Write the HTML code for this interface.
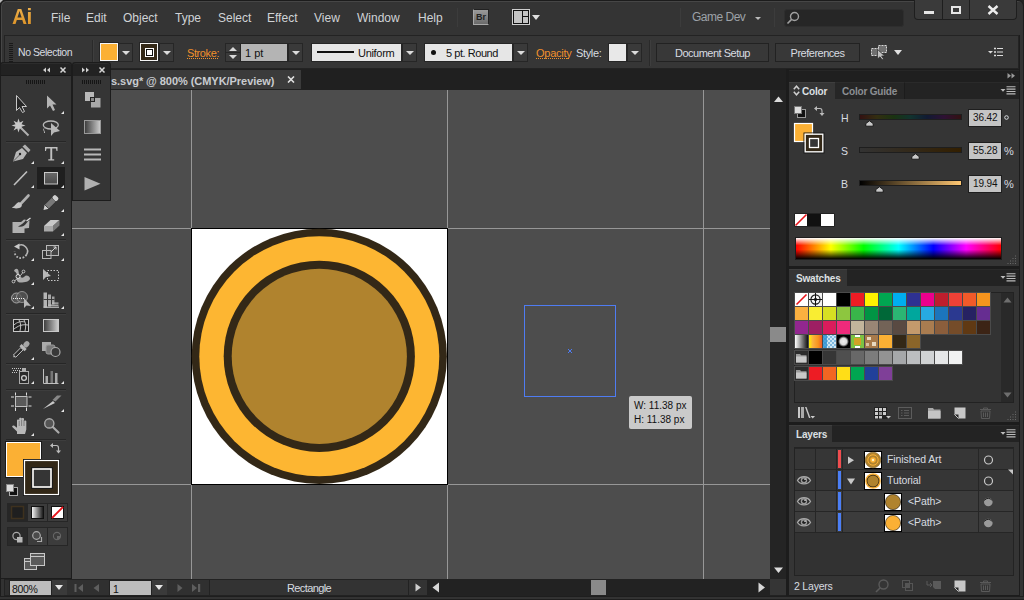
<!DOCTYPE html>
<html><head><meta charset="utf-8">
<style>
*{margin:0;padding:0;box-sizing:border-box}
html,body{width:1024px;height:600px;overflow:hidden;background:#232323}
body{position:relative;font-family:"Liberation Sans",sans-serif;font-size:11px;color:#d6d6d6}
.a{position:absolute}
.t{position:absolute;white-space:nowrap;line-height:1}
.dd{position:absolute;top:43px;width:15px;height:19px;background:#3a3a3a;border:1px solid #262626}
.dd::after{content:"";position:absolute;left:3px;top:7px;border-left:4px solid transparent;border-right:4px solid transparent;border-top:4px solid #dcdcdc}
.btn{position:absolute;top:43px;height:19px;background:#383838;border:1px solid #222;text-align:center;font-size:11px;line-height:18px;color:#d8dce0;white-space:nowrap;letter-spacing:-0.5px}
.sdd{position:absolute;top:580px;width:15px;height:15px;background:#3a3a3a}
.sdd::after{content:"";position:absolute;left:3px;top:5px;border-left:4.5px solid transparent;border-right:4.5px solid transparent;border-top:5px solid #e6e6e6}
.ptab{font-size:10px;font-weight:bold;letter-spacing:-0.2px}
.mi{top:12px;font-size:12px;color:#d0d3d6}
</style></head><body>
<!-- window frame -->
<div class="a" style="left:0;top:0;width:1024px;height:600px;background:#333;border-radius:6px 6px 0 0;border:1px solid #1c1c1c;box-shadow:inset 1px 1px 0 #464646"></div>
<div class="a" style="left:0;top:0;width:3px;height:3px;background:#bbb;clip-path:polygon(0 0,100% 0,0 100%)"></div>
<!-- menu bar -->
<div class="a" id="menubar" style="left:2px;top:2px;width:1020px;height:33px;background:#343434;border-radius:5px 5px 0 0"></div>

<!-- MENUBAR CONTENT -->
<div class="t" style="left:12px;top:6px;font-size:22px;font-weight:bold;color:#e39c2f;background:linear-gradient(#f0b24e,#d98f22);-webkit-background-clip:text;background-clip:text;-webkit-text-fill-color:transparent;transform:scaleX(0.95);transform-origin:0 0;letter-spacing:-0.5px">Ai</div>
<div class="t mi" style="left:51px">File</div>
<div class="t mi" style="left:86px">Edit</div>
<div class="t mi" style="left:123px">Object</div>
<div class="t mi" style="left:175px">Type</div>
<div class="t mi" style="left:218px">Select</div>
<div class="t mi" style="left:267px">Effect</div>
<div class="t mi" style="left:314px">View</div>
<div class="t mi" style="left:357px">Window</div>
<div class="t mi" style="left:418px">Help</div>
<div class="a" style="left:457px;top:8px;width:1px;height:19px;background:#262626;border-right:1px solid #3c3c3c"></div>
<div class="a" style="left:473px;top:9px;width:16px;height:16px;background:linear-gradient(#9a9a9a,#6a6a6a);border:1px solid #a8a8a8;border-top-color:#222;border-right-color:#222"></div>
<div class="t" style="left:476px;top:13px;font-size:9px;color:#222;font-weight:bold">Br</div>
<div class="a" style="left:512px;top:9px;width:18px;height:16px;border:1px solid #cfcfcf;background:#111"></div>
<div class="a" style="left:514px;top:11px;width:8px;height:12px;background:#c4c4c4"></div>
<div class="a" style="left:523px;top:11px;width:5px;height:5px;background:#c4c4c4"></div>
<div class="a" style="left:523px;top:17px;width:5px;height:6px;background:#c4c4c4"></div>
<svg class="a" style="left:532px;top:15px" width="8" height="6"><path d="M0 0H8L4 5Z" fill="#e0e0e0"/></svg>
<div class="a" style="left:680px;top:8px;width:1px;height:19px;background:#262626;border-right:1px solid #3c3c3c"></div>
<div class="t" style="left:692px;top:11px;font-size:12px;color:#9da2a8;letter-spacing:-0.5px">Game Dev</div>
<svg class="a" style="left:755px;top:17px" width="6" height="3"><path d="M0 0H6L3 3Z" fill="#bbb"/></svg>
<div class="a" style="left:774px;top:8px;width:1px;height:19px;background:#262626;border-right:1px solid #3c3c3c"></div>
<div class="a" style="left:784px;top:9px;width:120px;height:18px;background:#262626;border-radius:3px;border:1px solid #2e2e2e"></div>
<svg class="a" style="left:786px;top:11px" width="14" height="14"><circle cx="8.5" cy="5.5" r="4" fill="none" stroke="#a0a0a0" stroke-width="1.4"/><path d="M5.6 8.4L1.5 12.5" stroke="#a0a0a0" stroke-width="1.6"/></svg>
<div class="a" style="left:914px;top:0;width:103px;height:20px;background:#3a3a3a;border:1px solid #1e1e1e;border-top:none;border-radius:0 0 4px 4px"></div>
<div class="a" style="left:942px;top:0;width:1px;height:19px;background:#1e1e1e"></div>
<div class="a" style="left:969px;top:0;width:1px;height:19px;background:#1e1e1e"></div>
<div class="a" style="left:924px;top:11px;width:10px;height:3px;background:#e6e6e6"></div>
<div class="a" style="left:951px;top:6px;width:10px;height:8px;border:2px solid #e6e6e6"></div>
<svg class="a" style="left:987px;top:5px" width="12" height="10"><path d="M1.5 1L10.5 9M10.5 1L1.5 9" stroke="#ededed" stroke-width="2.4"/></svg>
<!-- control bar -->
<div class="a" id="ctrl" style="left:4px;top:35px;width:1015px;height:34px;background:#363636;border:1px solid #232323"></div>

<!-- CONTROL BAR CONTENT -->
<div class="a" style="left:9px;top:43px;width:4px;height:19px;background:repeating-linear-gradient(#1a1a1a 0 1px,transparent 1px 2px)"></div>
<div class="t" style="left:18px;top:47px;font-size:10.5px;color:#d8dce0;letter-spacing:-0.45px">No Selection</div>
<div class="a" style="left:92px;top:40px;width:2px;height:26px;border-left:1px solid #2a2a2a;border-right:1px solid #3e3e3e"></div>
<div class="a" style="left:100px;top:43px;width:18px;height:18px;background:#fbb034;border:1px solid #f4f4f4;box-shadow:0 0 0 1px #262626"></div>
<div class="dd" style="left:118px"></div>
<div class="a" style="left:140px;top:43px;width:18px;height:18px;background:#332817;border:1px solid #f4f4f4;box-shadow:0 0 0 1px #262626"></div>
<div class="a" style="left:145px;top:48px;width:9px;height:9px;background:#fff;border:1px solid #fff;box-shadow:inset 0 0 0 1px #111"></div>
<div class="dd" style="left:159px"></div>
<div class="t" style="left:187px;top:48px;font-size:11px;color:#f0902c;letter-spacing:-0.4px">Stroke:</div>
<div class="a" style="left:187px;top:58px;width:32px;height:1px;background:repeating-linear-gradient(90deg,#f0902c 0 1px,transparent 1px 2px)"></div>
<div class="a" style="left:225px;top:43px;width:16px;height:19px;background:#3a3a3a;border:1px solid #262626"></div>
<div class="a" style="left:226px;top:52px;width:14px;height:1px;background:#262626"></div>
<svg class="a" style="left:229px;top:47px" width="8" height="4"><path d="M0 4H8L4 0Z" fill="#d8d8d8"/></svg>
<svg class="a" style="left:229px;top:55px" width="8" height="4"><path d="M0 0H8L4 4Z" fill="#d8d8d8"/></svg>
<div class="a" style="left:241px;top:43px;width:47px;height:19px;background:#b4b4b4;border:1px solid #262626;border-left:none"></div>
<div class="t" style="left:245px;top:48px;font-size:11px;color:#111">1 pt</div>
<div class="dd" style="left:288px"></div>
<div class="a" style="left:311px;top:43px;width:91px;height:19px;background:#e6e6e6;border:1px solid #262626"></div>
<div class="a" style="left:317px;top:51px;width:37px;height:2px;background:#111"></div>
<div class="t" style="left:358px;top:48px;font-size:11px;color:#111;letter-spacing:-0.3px">Uniform</div>
<div class="dd" style="left:402px"></div>
<div class="a" style="left:424px;top:43px;width:89px;height:19px;background:#e6e6e6;border:1px solid #262626"></div>
<div class="a" style="left:431px;top:50px;width:5px;height:5px;border-radius:50%;background:#111"></div>
<div class="t" style="left:446px;top:48px;font-size:11px;color:#111;letter-spacing:-0.45px">5 pt. Round</div>
<div class="dd" style="left:513px"></div>
<div class="t" style="left:536px;top:48px;font-size:11px;color:#f0902c;letter-spacing:-0.25px">Opacity</div>
<div class="a" style="left:536px;top:58px;width:34px;height:1px;background:repeating-linear-gradient(90deg,#f0902c 0 1px,transparent 1px 2px)"></div>
<div class="t" style="left:576px;top:48px;font-size:11px;color:#d8dce0;letter-spacing:-0.35px">Style:</div>
<div class="a" style="left:608px;top:43px;width:19px;height:19px;background:#e8e8e8;border:1px solid #262626"></div>
<div class="dd" style="left:627px"></div>
<div class="a" style="left:649px;top:40px;width:2px;height:26px;border-left:1px solid #2a2a2a;border-right:1px solid #3e3e3e"></div>
<div class="btn" style="left:656px;width:113px">Document Setup</div>
<div class="btn" style="left:775px;width:85px">Preferences</div>
<svg class="a" style="left:870px;top:44px" width="18" height="16">
<rect x="1.5" y="4.5" width="8" height="7" fill="#707070" stroke="#d8d8d8" stroke-width="1" stroke-dasharray="2 1"/>
<rect x="8.5" y="1.5" width="8" height="7" fill="#707070" stroke="#d8d8d8" stroke-width="1" stroke-dasharray="2 1"/>
<path d="M7.5 5.5L7.5 15L10 12.8L12.2 15.8L13.6 14.9L11.6 12H14.8Z" fill="#c0c0c0" stroke="#2a2a2a" stroke-width="0.7"/>
</svg>
<svg class="a" style="left:894px;top:50px" width="8" height="6"><path d="M0 0H8L4 5Z" fill="#e0e0e0"/></svg>
<svg class="a" style="left:988px;top:47px" width="16" height="10"><path d="M0 4H5L2.5 6.5Z" fill="#ddd"/><path d="M6 1.5H8M6 5H8M6 8.5H8" stroke="#ddd" stroke-width="1.6"/><path d="M9 1.5H15M9 5H15M9 8.5H15" stroke="#ddd" stroke-width="1.2"/></svg>
<!-- tab bar strip -->
<div class="a" style="left:4px;top:69px;width:783px;height:21px;background:#202020"></div>

<!-- TAB -->
<div class="a" style="left:73px;top:70px;width:228px;height:19px;background:#3b3b3b"></div>
<div class="t" style="left:111px;top:76px;font-size:11px;font-weight:bold;color:#c9ccd0;letter-spacing:-0.05px">s.svg* @ 800% (CMYK/Preview)</div>
<svg class="a" style="left:287px;top:76px" width="8" height="7"><path d="M1 0.5L7 6.5M7 0.5L1 6.5" stroke="#e0e0e0" stroke-width="1.6"/></svg>
<!-- canvas -->
<div class="a" id="canvas" style="left:72px;top:90px;width:698px;height:489px;background:#4d4d4d;overflow:hidden"></div>

<svg class="a" style="left:72px;top:90px" width="698" height="489">
<g transform="translate(-72,-90)">
<rect x="191.5" y="228.5" width="256" height="256" fill="#fff" stroke="#000" stroke-width="1"/>
<path d="M191.5 90V228M447.5 90V228M703.5 90V579M191.5 485V579M447.5 485V579M72 228.5H191M448 228.5H770M72 484.5H191M448 484.5H770" stroke="#979797" stroke-width="1" fill="none"/>
<circle cx="319.3" cy="356.3" r="127.6" fill="#332817"/>
<circle cx="319.3" cy="356.3" r="120" fill="#fdb632"/>
<circle cx="319.3" cy="356.3" r="95.6" fill="#332817"/>
<circle cx="319.3" cy="356.3" r="87.6" fill="#b0832e"/>
<rect x="524.5" y="305.5" width="91" height="91" fill="none" stroke="#4f7cf2" stroke-width="1"/>
<path d="M568 349L572 353M572 349L568 353" stroke="#4f7cf2" stroke-width="1"/>
</g>
</svg>
<div class="a" style="left:629px;top:396px;width:63px;height:33px;background:#cacaca;border-radius:2px"></div>
<div class="t" style="left:634px;top:401px;font-size:10px;color:#111">W: 11.38 px</div>
<div class="t" style="left:634px;top:415px;font-size:10px;color:#111">H: 11.38 px</div>
<!-- v scrollbar -->
<div class="a" style="left:770px;top:90px;width:16px;height:489px;background:#242424"></div>
<svg class="a" style="left:774px;top:96px" width="10" height="7"><path d="M0 6H9L4.5 0.5Z" fill="#dcdcdc"/></svg>
<svg class="a" style="left:774px;top:567px" width="10" height="7"><path d="M0 0.5H9L4.5 6Z" fill="#dcdcdc"/></svg>
<div class="a" style="left:770px;top:327px;width:16px;height:15px;background:#8a8a8a"></div>
<!-- status bar -->
<div class="a" style="left:1px;top:579px;width:786px;height:17px;background:#323232"></div>
<div class="a" style="left:4px;top:579px;width:783px;height:17px;background:#222"></div>
<div class="a" style="left:5px;top:580px;width:4px;height:15px;background:#2e2e2e"></div>
<div class="a" style="left:10px;top:581px;width:41px;height:14px;background:#bdbdbd"></div>
<div class="t" style="left:12px;top:584px;font-size:10.5px;color:#111;letter-spacing:-0.3px">800%</div>
<div class="sdd" style="left:52px"></div>
<div class="a" style="left:67px;top:580px;width:42px;height:15px;background:#303030"></div>
<svg class="a" style="left:74px;top:584px" width="10" height="8"><rect x="0.5" y="0" width="2" height="8" fill="#5e5e5e"/><path d="M9 0V8L4 4Z" fill="#5e5e5e"/></svg>
<svg class="a" style="left:93px;top:584px" width="7" height="8"><path d="M6 0V8L0.5 4Z" fill="#5e5e5e"/></svg>
<div class="a" style="left:110px;top:581px;width:41px;height:14px;background:#bdbdbd"></div>
<div class="t" style="left:113px;top:584px;font-size:10.5px;color:#111">1</div>
<div class="sdd" style="left:152px"></div>
<div class="a" style="left:167px;top:580px;width:42px;height:15px;background:#303030"></div>
<svg class="a" style="left:177px;top:584px" width="7" height="8"><path d="M0.5 0V8L5.5 4Z" fill="#5e5e5e"/></svg>
<svg class="a" style="left:192px;top:584px" width="10" height="8"><path d="M0 0V8L5 4Z" fill="#5e5e5e"/><rect x="6" y="0" width="2.2" height="8" fill="#5e5e5e"/></svg>
<div class="a" style="left:210px;top:580px;width:198px;height:15px;background:#333"></div>
<div class="t" style="left:287px;top:583px;font-size:11px;color:#d8dce0;letter-spacing:-0.6px">Rectangle</div>
<div class="a" style="left:409px;top:580px;width:18px;height:15px;background:#333"></div>
<svg class="a" style="left:415px;top:583px" width="7" height="9"><path d="M0.5 0.5V8.5L6 4.5Z" fill="#cfcfcf"/></svg>
<div class="a" style="left:428px;top:579px;width:342px;height:17px;background:#222"></div>
<svg class="a" style="left:432px;top:582px" width="8" height="11"><path d="M7 0.5V10.5L0.5 5.5Z" fill="#d6d6d6"/></svg>
<svg class="a" style="left:758px;top:582px" width="8" height="11"><path d="M0.5 0.5V10.5L7 5.5Z" fill="#d6d6d6"/></svg>
<div class="a" style="left:591px;top:580px;width:15px;height:15px;background:#8a8a8a"></div>
<div class="a" style="left:770px;top:579px;width:16px;height:16px;background:#353535"></div>
<div class="a" style="left:0;top:596px;width:1024px;height:4px;background:#333;border-top:1px solid #1e1e1e;border-bottom:1px solid #1e1e1e"></div>
<!-- DOCK -->
<div class="a" style="left:786px;top:69px;width:3px;height:527px;background:#1c1c1c"></div>
<div class="a" style="left:789px;top:69px;width:230px;height:527px;background:#1c1c1c"></div>
<div class="a" style="left:1019px;top:35px;width:5px;height:561px;background:#333;border-left:1px solid #1c1c1c;border-right:1px solid #1e1e1e"></div>
<div class="a" style="left:789px;top:70px;width:230px;height:12px;background:#1f1f1f;border-top:1px solid #262626"></div>
<svg class="a" style="left:1007px;top:73px" width="9" height="6"><path d="M0.5 0V5.5L4 2.75Z M4.5 0V5.5L8 2.75Z" fill="#9a9a9a"/></svg>
<div class="a" style="left:789px;top:82px;width:230px;height:17px;background:#232323;border-top:1px solid #2a2a2a"></div>
<div class="a" style="left:789px;top:82px;width:46px;height:17px;background:#353535;border-top:1px solid #3e3e3e"></div>
<div class="t ptab" style="left:802px;top:87px;color:#dde0e3">Color</div>
<div class="a" style="left:835px;top:82px;width:70px;height:17px;background:#262626;border-right:1px solid #1c1c1c;border-top:1px solid #2c2c2c"></div>
<div class="t ptab" style="left:842px;top:87px;color:#8c8f93">Color Guide</div>
<svg class="a" style="left:1000px;top:86px" width="16" height="9"><path d="M0.5 3H5.5L3 5.8Z" fill="#bbb"/><path d="M6.5 0.7H15.5M6.5 3.1H15.5M6.5 5.5H15.5M6.5 7.9H15.5" stroke="#bbb" stroke-width="1.1"/></svg>
<svg class="a" style="left:793px;top:85px" width="7" height="11"><path d="M0.8 4.2L3.5 1.2L6.2 4.2M0.8 6.8L3.5 9.8L6.2 6.8" fill="none" stroke="#d0d0d0" stroke-width="1.5"/></svg>
<div class="a" style="left:789px;top:99px;width:230px;height:167px;background:#353535"></div>
<svg class="a" style="left:793px;top:104px" width="34" height="50"><rect x="4.5" y="5.5" width="8" height="8" fill="#111" stroke="#999" stroke-width="1"/><rect x="1.5" y="2.5" width="7" height="7" fill="#ddd" stroke="#777" stroke-width="1"/><path d="M22 4.5H27C28.5 4.5 29 5.5 29 7V10" fill="none" stroke="#bbb" stroke-width="1.1"/><path d="M21 4.5L24 2V7Z M26.5 9H31.5L29 12Z" fill="#bbb"/><rect x="1.5" y="19.5" width="18" height="18" fill="#fbb034" stroke="#fff" stroke-width="1.2"/><rect x="11" y="29" width="20" height="20" fill="none" stroke="#1a1a1a" stroke-width="1"/><rect x="12.2" y="30.2" width="17.6" height="17.6" fill="#332817" stroke="#fff" stroke-width="1.3"/><rect x="16.5" y="34.5" width="9" height="9" fill="#353535" stroke="#fff" stroke-width="1.3"/></svg>
<div class="t" style="left:841px;top:113px;font-size:10.5px;color:#d8dce0">H</div>
<div class="a" style="left:859px;top:114px;width:103px;height:6px;background:linear-gradient(90deg,#331111,#332e11,#1a3311,#11332e,#111a33,#2e1133,#331111);border:1px solid #1e1e1e"></div>
<svg class="a" style="left:865.1px;top:120px" width="9" height="7"><path d="M0.8 6.2V3.6L4.5 0.8L8.2 3.6V6.2Z" fill="#c8c8c8" stroke="#111" stroke-width="0.9"/></svg>
<div class="a" style="left:968px;top:109px;width:34px;height:18px;background:#c4c4c4;border:1px solid #1e1e1e"></div>
<div class="t" style="left:973px;top:113px;font-size:10px;color:#111;letter-spacing:-0.1px">36.42</div>
<svg class="a" style="left:1004px;top:115px" width="5" height="5"><circle cx="2.5" cy="2.5" r="1.8" fill="none" stroke="#d8dce0" stroke-width="1"/></svg>
<div class="t" style="left:841px;top:146px;font-size:10.5px;color:#d8dce0">S</div>
<div class="a" style="left:859px;top:147px;width:103px;height:6px;background:linear-gradient(90deg,#333333,#331f00);border:1px solid #1e1e1e"></div>
<svg class="a" style="left:910.9px;top:153px" width="9" height="7"><path d="M0.8 6.2V3.6L4.5 0.8L8.2 3.6V6.2Z" fill="#c8c8c8" stroke="#111" stroke-width="0.9"/></svg>
<div class="a" style="left:968px;top:142px;width:34px;height:18px;background:#c4c4c4;border:1px solid #1e1e1e"></div>
<div class="t" style="left:973px;top:146px;font-size:10px;color:#111;letter-spacing:-0.1px">55.28</div>
<div class="t" style="left:1004px;top:146px;font-size:11px;color:#d8dce0">%</div>
<div class="t" style="left:841px;top:179px;font-size:10.5px;color:#d8dce0">B</div>
<div class="a" style="left:859px;top:180px;width:103px;height:6px;background:linear-gradient(90deg,#000,#ffc772);border:1px solid #1e1e1e"></div>
<svg class="a" style="left:874.8px;top:186px" width="9" height="7"><path d="M0.8 6.2V3.6L4.5 0.8L8.2 3.6V6.2Z" fill="#c8c8c8" stroke="#111" stroke-width="0.9"/></svg>
<div class="a" style="left:968px;top:175px;width:34px;height:18px;background:#c4c4c4;border:1px solid #1e1e1e"></div>
<div class="t" style="left:973px;top:179px;font-size:10px;color:#111;letter-spacing:-0.1px">19.94</div>
<div class="t" style="left:1004px;top:179px;font-size:11px;color:#d8dce0">%</div>
<svg class="a" style="left:794px;top:213px" width="41" height="14"><rect x="0.5" y="0.5" width="40" height="13" fill="#111"/><rect x="1" y="1" width="12" height="12" fill="#fff"/><path d="M1.5 12.5L12.5 1.5" stroke="#e8141b" stroke-width="1.6"/><rect x="27" y="1" width="13" height="12" fill="#fff"/></svg>
<div class="a" style="left:795px;top:237px;width:207px;height:23px;border:1px solid #1e1e1e;background:linear-gradient(to bottom,rgba(255,255,255,1) 0%,rgba(255,255,255,0) 35%,rgba(0,0,0,0) 55%,rgba(0,0,0,1) 100%),linear-gradient(90deg,#f00,#ff0 17%,#0f0 33%,#0ff 50%,#00f 67%,#f0f 83%,#f00)"></div>
<svg class="a" style="left:1007px;top:255px" width="10" height="10"><rect x="0.5" y="8.0" width="1" height="1" fill="#6a6a6a"/><rect x="3.0" y="5.5" width="1" height="1" fill="#6a6a6a"/><rect x="3.0" y="8.0" width="1" height="1" fill="#6a6a6a"/><rect x="5.5" y="3.0" width="1" height="1" fill="#6a6a6a"/><rect x="5.5" y="5.5" width="1" height="1" fill="#6a6a6a"/><rect x="5.5" y="8.0" width="1" height="1" fill="#6a6a6a"/><rect x="8.0" y="0.5" width="1" height="1" fill="#6a6a6a"/><rect x="8.0" y="3.0" width="1" height="1" fill="#6a6a6a"/><rect x="8.0" y="5.5" width="1" height="1" fill="#6a6a6a"/><rect x="8.0" y="8.0" width="1" height="1" fill="#6a6a6a"/></svg>
<div class="a" style="left:789px;top:266px;width:230px;height:3px;background:#1c1c1c"></div>
<div class="a" style="left:789px;top:269px;width:230px;height:17px;background:#232323;border-top:1px solid #2a2a2a"></div>
<div class="a" style="left:789px;top:269px;width:58px;height:17px;background:#353535;border-top:1px solid #3e3e3e"></div>
<div class="t ptab" style="left:796px;top:274px;color:#dde0e3">Swatches</div>
<svg class="a" style="left:1000px;top:273px" width="16" height="9"><path d="M0.5 3H5.5L3 5.8Z" fill="#bbb"/><path d="M6.5 0.7H15.5M6.5 3.1H15.5M6.5 5.5H15.5M6.5 7.9H15.5" stroke="#bbb" stroke-width="1.1"/></svg>
<div class="a" style="left:789px;top:286px;width:230px;height:136px;background:#353535"></div>
<div class="a" style="left:794px;top:292px;width:220px;height:111px;background:#333;border:1px solid #222"></div>
<div class="a" style="left:1001px;top:293px;width:12px;height:109px;background:#292929"></div>
<svg class="a" style="left:1003px;top:297px" width="9" height="6"><path d="M0.5 5.5H8.5L4.5 0.5Z" fill="#6e6e6e"/></svg>
<svg class="a" style="left:1003px;top:392px" width="9" height="6"><path d="M0.5 0.5H8.5L4.5 5.5Z" fill="#6e6e6e"/></svg>
<svg class="a" style="left:794px;top:292px" width="207" height="92"><defs><linearGradient id="sg1"><stop offset="0" stop-color="#fff"/><stop offset="1" stop-color="#111"/></linearGradient><linearGradient id="sg2"><stop offset="0" stop-color="#fff200"/><stop offset="0.3" stop-color="#fbb040"/><stop offset="0.7" stop-color="#f7941d"/><stop offset="1" stop-color="#f15a29"/></linearGradient><pattern id="chk" width="4" height="4" patternUnits="userSpaceOnUse"><rect width="4" height="4" fill="#cfe8f5"/><rect width="2" height="2" fill="#7fb9e0"/><rect x="2" y="2" width="2" height="2" fill="#7fb9e0"/></pattern><radialGradient id="rad"><stop offset="0" stop-color="#eee"/><stop offset="0.6" stop-color="#ddd"/><stop offset="1" stop-color="#000"/></radialGradient></defs><rect x="0" y="0" width="197" height="15" fill="#4a4a4a"/><rect x="0" y="14" width="197" height="15" fill="#4a4a4a"/><rect x="0" y="28" width="197" height="15" fill="#4a4a4a"/><rect x="0" y="42" width="127" height="15" fill="#4a4a4a"/><rect x="1" y="1" width="13" height="13" fill="#fff"/><path d="M2.5 12.5L12.5 2.5" stroke="#e8141b" stroke-width="1.6"/><rect x="15" y="1" width="13" height="13" fill="#f2f2f2"/><circle cx="21.5" cy="7.5" r="4.6" fill="none" stroke="#111" stroke-width="1.1"/><circle cx="21.5" cy="7.5" r="1.3" fill="#fff" stroke="#111" stroke-width="0.9"/><path d="M21.5 1V14M15 7.5H28" stroke="#111" stroke-width="1"/><rect x="29" y="1" width="13" height="13" fill="#ffffff"/><rect x="43" y="1" width="13" height="13" fill="#000000"/><rect x="57" y="1" width="13" height="13" fill="#ed1c24"/><rect x="71" y="1" width="13" height="13" fill="#fff200"/><rect x="85" y="1" width="13" height="13" fill="#00a651"/><rect x="99" y="1" width="13" height="13" fill="#00aeef"/><rect x="113" y="1" width="13" height="13" fill="#2e3192"/><rect x="127" y="1" width="13" height="13" fill="#ec008c"/><rect x="141" y="1" width="13" height="13" fill="#be1e2d"/><rect x="155" y="1" width="13" height="13" fill="#ef4136"/><rect x="169" y="1" width="13" height="13" fill="#f15a29"/><rect x="183" y="1" width="13" height="13" fill="#f7941d"/><rect x="1" y="15" width="13" height="13" fill="#fbb040"/><rect x="15" y="15" width="13" height="13" fill="#f9ed32"/><rect x="29" y="15" width="13" height="13" fill="#d7df23"/><rect x="43" y="15" width="13" height="13" fill="#8dc63f"/><rect x="57" y="15" width="13" height="13" fill="#39b54a"/><rect x="71" y="15" width="13" height="13" fill="#009444"/><rect x="85" y="15" width="13" height="13" fill="#006838"/><rect x="99" y="15" width="13" height="13" fill="#2bb673"/><rect x="113" y="15" width="13" height="13" fill="#00a79d"/><rect x="127" y="15" width="13" height="13" fill="#27aae1"/><rect x="141" y="15" width="13" height="13" fill="#1c75bc"/><rect x="155" y="15" width="13" height="13" fill="#2b3990"/><rect x="169" y="15" width="13" height="13" fill="#262262"/><rect x="183" y="15" width="13" height="13" fill="#662d91"/><rect x="1" y="29" width="13" height="13" fill="#92278f"/><rect x="15" y="29" width="13" height="13" fill="#9e1f63"/><rect x="29" y="29" width="13" height="13" fill="#da1c5c"/><rect x="43" y="29" width="13" height="13" fill="#ee2a7b"/><rect x="57" y="29" width="13" height="13" fill="#c2b59b"/><rect x="71" y="29" width="13" height="13" fill="#998675"/><rect x="85" y="29" width="13" height="13" fill="#736357"/><rect x="99" y="29" width="13" height="13" fill="#594a42"/><rect x="113" y="29" width="13" height="13" fill="#c49a6c"/><rect x="127" y="29" width="13" height="13" fill="#a97c50"/><rect x="141" y="29" width="13" height="13" fill="#8b5e3c"/><rect x="155" y="29" width="13" height="13" fill="#754c29"/><rect x="169" y="29" width="13" height="13" fill="#603913"/><rect x="183" y="29" width="13" height="13" fill="#3c2415"/><rect x="1" y="43" width="13" height="13" fill="url(#sg1)"/><rect x="15" y="43" width="13" height="13" fill="url(#sg2)"/><rect x="29" y="43" width="13" height="13" fill="url(#chk)"/><rect x="29" y="43" width="4" height="13" fill="#2a8fd0" opacity="0.8"/><rect x="43" y="43" width="13" height="13" fill="#000"/><circle cx="49.5" cy="49.5" r="5.5" fill="url(#rad)"/><rect x="57" y="43" width="13" height="13" fill="#7cc242"/><rect x="60" y="46" width="7" height="7" fill="#f7941d" opacity="0.7"/><rect x="61" y="43" width="5" height="2" fill="#fff"/><rect x="61" y="54" width="5" height="2" fill="#fff"/><rect x="71" y="43" width="13" height="13" fill="#a87a4a"/><rect x="73" y="45" width="4" height="3" fill="#e8d9c0"/><rect x="78" y="50" width="4" height="4" fill="#e8d9c0"/><rect x="72" y="51" width="3" height="3" fill="#d8c0a0"/><rect x="85" y="43" width="13" height="13" fill="#fbb034"/><rect x="99" y="43" width="13" height="13" fill="#332817"/><rect x="113" y="43" width="13" height="13" fill="#8b6529"/><rect x="0" y="58" width="169" height="15" fill="#4a4a4a"/><rect x="1" y="59" width="13" height="13" fill="#2c2c2c"/><path d="M2 62H6L7.2 63.2H12.5V70.5H2Z" fill="#9a9a9a"/><rect x="2" y="64.5" width="10.5" height="6" fill="#c8c8c8"/><rect x="15" y="59" width="13" height="13" fill="#000000"/><rect x="29" y="59" width="13" height="13" fill="#363636"/><rect x="43" y="59" width="13" height="13" fill="#4f4f4f"/><rect x="57" y="59" width="13" height="13" fill="#686868"/><rect x="71" y="59" width="13" height="13" fill="#7c7c7c"/><rect x="85" y="59" width="13" height="13" fill="#939393"/><rect x="99" y="59" width="13" height="13" fill="#a6a8aa"/><rect x="113" y="59" width="13" height="13" fill="#bcbec0"/><rect x="127" y="59" width="13" height="13" fill="#d1d3d4"/><rect x="141" y="59" width="13" height="13" fill="#e6e7e8"/><rect x="155" y="59" width="13" height="13" fill="#f1f2f2"/><rect x="0" y="74" width="99" height="15" fill="#4a4a4a"/><rect x="1" y="75" width="13" height="13" fill="#2c2c2c"/><path d="M2 78H6L7.2 79.2H12.5V86.5H2Z" fill="#9a9a9a"/><rect x="2" y="80.5" width="10.5" height="6" fill="#c8c8c8"/><rect x="15" y="75" width="13" height="13" fill="#ed1c24"/><rect x="29" y="75" width="13" height="13" fill="#f26522"/><rect x="43" y="75" width="13" height="13" fill="#ffde17"/><rect x="57" y="75" width="13" height="13" fill="#00a651"/><rect x="71" y="75" width="13" height="13" fill="#21409a"/><rect x="85" y="75" width="13" height="13" fill="#7f3f98"/></svg>
<svg class="a" style="left:796px;top:405px" width="200" height="16"><rect x="2" y="2" width="2" height="11" fill="#c8c8c8"/><rect x="5" y="2" width="3" height="11" fill="#aaa"/><path d="M9 2L10.5 2L14.5 13H13Z" fill="#c8c8c8"/><path d="M14.5 11H19L16.75 13.5Z" fill="#ccc"/><rect x="78" y="2" width="13" height="12" fill="#222"/><rect x="79" y="3" width="3" height="3" fill="#ccc"/><rect x="83" y="3" width="3" height="3" fill="#ccc"/><rect x="87" y="3" width="3" height="3" fill="#ccc"/><rect x="79" y="7" width="3" height="3" fill="#ccc"/><rect x="83" y="7" width="3" height="3" fill="#999"/><rect x="87" y="7" width="3" height="3" fill="#ccc"/><rect x="79" y="11" width="3" height="2.5" fill="#ccc"/><rect x="83" y="11" width="3" height="2.5" fill="#ccc"/><path d="M90 11H95L92.5 13.5Z" fill="#ccc"/><rect x="102.5" y="2.5" width="13" height="11" fill="none" stroke="#5c5c5c"/><path d="M105 5.5H106.5M108 5.5H113M105 8H106.5M108 8H113M105 10.5H106.5M108 10.5H113" stroke="#5c5c5c"/><path d="M132 3H137L138 4.5H144.5V13.5H132Z" fill="#a8a8a8"/><rect x="132" y="6" width="12.5" height="7.5" fill="#c4c4c4"/><path d="M158.5 2.5H169.5V13.5H162.5L158.5 9.5Z" fill="#c8c8c8"/><path d="M158.5 9.5H162.5V13.5Z" fill="#2a2a2a"/><path d="M158.5 9.5L162.5 13.5" stroke="#ddd" stroke-width="0.8"/><path d="M184 4.5H195M187.5 4.5V3H191.5V4.5" stroke="#5a5a5a" fill="none"/><path d="M185 6H194L193.5 13.5H185.5Z" fill="none" stroke="#5a5a5a"/><path d="M187.5 7.5V12M189.5 7.5V12M191.5 7.5V12" stroke="#5a5a5a"/></svg>
<svg class="a" style="left:1007px;top:411px" width="10" height="10"><rect x="0.5" y="8.0" width="1" height="1" fill="#6a6a6a"/><rect x="3.0" y="5.5" width="1" height="1" fill="#6a6a6a"/><rect x="3.0" y="8.0" width="1" height="1" fill="#6a6a6a"/><rect x="5.5" y="3.0" width="1" height="1" fill="#6a6a6a"/><rect x="5.5" y="5.5" width="1" height="1" fill="#6a6a6a"/><rect x="5.5" y="8.0" width="1" height="1" fill="#6a6a6a"/><rect x="8.0" y="0.5" width="1" height="1" fill="#6a6a6a"/><rect x="8.0" y="3.0" width="1" height="1" fill="#6a6a6a"/><rect x="8.0" y="5.5" width="1" height="1" fill="#6a6a6a"/><rect x="8.0" y="8.0" width="1" height="1" fill="#6a6a6a"/></svg>
<div class="a" style="left:789px;top:422px;width:230px;height:3px;background:#1c1c1c"></div>
<div class="a" style="left:789px;top:425px;width:230px;height:17px;background:#232323;border-top:1px solid #2a2a2a"></div>
<div class="a" style="left:789px;top:425px;width:43px;height:17px;background:#353535;border-top:1px solid #3e3e3e"></div>
<div class="t ptab" style="left:796px;top:430px;color:#dde0e3">Layers</div>
<svg class="a" style="left:1000px;top:429px" width="16" height="9"><path d="M0.5 3H5.5L3 5.8Z" fill="#bbb"/><path d="M6.5 0.7H15.5M6.5 3.1H15.5M6.5 5.5H15.5M6.5 7.9H15.5" stroke="#bbb" stroke-width="1.1"/></svg>
<div class="a" style="left:789px;top:442px;width:230px;height:153px;background:#353535"></div>
<div class="a" style="left:794px;top:447px;width:220px;height:129px;background:#323232;border:1px solid #232323"></div>
<svg class="a" style="left:794px;top:447px" width="220" height="88"><rect x="1" y="1" width="219" height="21" fill="#262626"/><rect x="1" y="2" width="20" height="20" fill="#363636"/><rect x="22" y="2" width="20" height="20" fill="#363636"/><rect x="49" y="2" width="135" height="20" fill="#363636"/><rect x="185" y="2" width="34" height="20" fill="#363636"/><rect x="43" y="2" width="5" height="20" fill="#363636"/><rect x="44" y="3" width="3" height="18" fill="#f04d4f"/><path d="M54 9.5V17L60 13.25Z" fill="#c8c8c8"/><rect x="70" y="4" width="18" height="18" fill="#000"/><rect x="71" y="5" width="16" height="16" fill="#fff"/><circle cx="79" cy="13" r="7.8" fill="#b0832e" stroke="#7a5a1e" stroke-width="0.6"/><circle cx="79" cy="13" r="5.2" fill="none" stroke="#fbb034" stroke-width="1"/><circle cx="79" cy="13" r="2.8" fill="#fbb034"/><circle cx="79" cy="13" r="1.2" fill="#fff3c0"/><circle cx="194.5" cy="13" r="4" fill="none" stroke="#c8c8c8" stroke-width="1.2"/><rect x="1" y="22" width="219" height="21" fill="#262626"/><rect x="1" y="23" width="20" height="20" fill="#363636"/><rect x="22" y="23" width="20" height="20" fill="#363636"/><rect x="49" y="23" width="135" height="20" fill="#363636"/><rect x="185" y="23" width="34" height="20" fill="#363636"/><rect x="43" y="23" width="5" height="20" fill="#363636"/><rect x="44" y="24" width="3" height="18" fill="#4b7ef5"/><path d="M3.5 33.5C6 28.5 14 28.5 16.5 33.5C14 38 6 38 3.5 33.5Z" fill="#2a2a2a" stroke="#a8a8a8" stroke-width="1.3"/><circle cx="10" cy="33.2" r="3.2" fill="#9a9a9a"/><circle cx="10" cy="33.2" r="1.8" fill="#222"/><circle cx="11" cy="32.2" r="0.8" fill="#ddd"/><path d="M53 31.5H61L57 37.5Z" fill="#c8c8c8"/><rect x="70" y="25" width="18" height="18" fill="#000"/><rect x="71" y="26" width="16" height="16" fill="#fff"/><circle cx="79" cy="34" r="7.8" fill="#fbb034"/><circle cx="79" cy="34" r="6.3" fill="#332817"/><circle cx="79" cy="34" r="5.6" fill="#b0832e"/><circle cx="194.5" cy="34" r="4" fill="none" stroke="#c8c8c8" stroke-width="1.2"/><rect x="1" y="43" width="219" height="21" fill="#262626"/><rect x="1" y="44" width="20" height="20" fill="#3c3c3c"/><rect x="22" y="44" width="20" height="20" fill="#3c3c3c"/><rect x="49" y="44" width="135" height="20" fill="#3c3c3c"/><rect x="185" y="44" width="34" height="20" fill="#3c3c3c"/><rect x="43" y="44" width="5" height="20" fill="#3c3c3c"/><rect x="44" y="45" width="3" height="18" fill="#4b7ef5"/><path d="M3.5 54.5C6 49.5 14 49.5 16.5 54.5C14 59 6 59 3.5 54.5Z" fill="#2a2a2a" stroke="#a8a8a8" stroke-width="1.3"/><circle cx="10" cy="54.2" r="3.2" fill="#9a9a9a"/><circle cx="10" cy="54.2" r="1.8" fill="#222"/><circle cx="11" cy="53.2" r="0.8" fill="#ddd"/><rect x="90" y="46" width="18" height="18" fill="#000"/><rect x="91" y="47" width="16" height="16" fill="#fff"/><circle cx="99" cy="55" r="7.6" fill="#b0832e" stroke="#332817" stroke-width="0.7"/><circle cx="194.3" cy="55" r="4.3" fill="#9a9a9a"/><path d="M190.5 53.5A4.3 4.3 0 0 1 198 53.5" fill="none" stroke="#222" stroke-width="1"/><rect x="1" y="64" width="219" height="21" fill="#262626"/><rect x="1" y="65" width="20" height="20" fill="#3c3c3c"/><rect x="22" y="65" width="20" height="20" fill="#3c3c3c"/><rect x="49" y="65" width="135" height="20" fill="#3c3c3c"/><rect x="185" y="65" width="34" height="20" fill="#3c3c3c"/><rect x="43" y="65" width="5" height="20" fill="#3c3c3c"/><rect x="44" y="66" width="3" height="18" fill="#4b7ef5"/><path d="M3.5 75.5C6 70.5 14 70.5 16.5 75.5C14 80 6 80 3.5 75.5Z" fill="#2a2a2a" stroke="#a8a8a8" stroke-width="1.3"/><circle cx="10" cy="75.2" r="3.2" fill="#9a9a9a"/><circle cx="10" cy="75.2" r="1.8" fill="#222"/><circle cx="11" cy="74.2" r="0.8" fill="#ddd"/><rect x="90" y="67" width="18" height="18" fill="#000"/><rect x="91" y="68" width="16" height="16" fill="#fff"/><circle cx="99" cy="76" r="7.6" fill="#fbb034" stroke="#332817" stroke-width="0.7"/><circle cx="194.3" cy="76" r="4.3" fill="#9a9a9a"/><path d="M190.5 74.5A4.3 4.3 0 0 1 198 74.5" fill="none" stroke="#222" stroke-width="1"/><rect x="1" y="85" width="219" height="1" fill="#262626"/><path d="M214 22.5H219V27.5Z" fill="#c8c8c8"/></svg>
<div class="t" style="left:887px;top:454px;font-size:10.5px;color:#d8dce0;letter-spacing:-0.1px">Finished Art</div>
<div class="t" style="left:887px;top:475px;font-size:10.5px;color:#d8dce0;letter-spacing:-0.1px">Tutorial</div>
<div class="t" style="left:908px;top:496px;font-size:10.5px;color:#d8dce0;letter-spacing:-0.1px">&lt;Path&gt;</div>
<div class="t" style="left:908px;top:517px;font-size:10.5px;color:#d8dce0;letter-spacing:-0.1px">&lt;Path&gt;</div>
<div class="t" style="left:794px;top:581px;font-size:10.5px;color:#d8dce0;letter-spacing:-0.2px">2 Layers</div>
<svg class="a" style="left:874px;top:578px" width="120" height="16"><circle cx="9.5" cy="6.5" r="4.5" fill="none" stroke="#5a5a5a" stroke-width="1.4"/><path d="M6.3 9.7L2 14" stroke="#5a5a5a" stroke-width="1.6"/><rect x="28.5" y="2.5" width="7" height="7" fill="none" stroke="#555"/><rect x="31.5" y="5.5" width="7" height="7" fill="none" stroke="#555"/><rect x="32" y="6" width="3" height="3" fill="#555"/><path d="M53 3V7H58M56 5L58 7L56 9" fill="none" stroke="#5a5a5a"/><path d="M59 3H67V11H61L59 9Z" fill="#5a5a5a"/><path d="M80.5 2.5H91.5V13.5H84.5L80.5 9.5Z" fill="#c8c8c8"/><path d="M80.5 9.5H84.5V13.5Z" fill="#2a2a2a"/><path d="M80.5 9.5L84.5 13.5" stroke="#ddd" stroke-width="0.8"/><path d="M106 4.5H117M109.5 4.5V3H113.5V4.5" stroke="#5a5a5a" fill="none"/><path d="M107 6H116L115.5 13.5H107.5Z" fill="none" stroke="#5a5a5a"/><path d="M109.5 7.5V12M111.5 7.5V12M113.5 7.5V12" stroke="#5a5a5a"/></svg>

<!-- TOOLS PANEL 1 -->
<div class="a" style="left:0;top:62px;width:72px;height:517px;background:#1c1c1c;border-radius:3px 3px 0 0"></div>
<div class="a" style="left:1px;top:63px;width:70px;height:13px;background:#222;border-radius:3px 3px 0 0;border-top:1px solid #2c2c2c;border-bottom:1px solid #1a1a1a"></div>
<div class="a" style="left:1px;top:76px;width:70px;height:502px;background:#353535"></div>
<!-- TOOLS PANEL 2 -->
<div class="a" style="left:72px;top:62px;width:39px;height:139px;background:#1c1c1c;border-radius:3px 3px 0 0"></div>
<div class="a" style="left:73px;top:63px;width:37px;height:13px;background:#222;border-radius:3px 3px 0 0;border-top:1px solid #2c2c2c"></div>
<div class="a" style="left:73px;top:76px;width:37px;height:124px;background:#353535"></div>
<svg class="a" style="left:0;top:0" width="120" height="600"><path d="M46 67.5V72.5L43 70Z M50 67.5V72.5L47 70Z" fill="#cfcfcf"/><path d="M60.5 67.5L65.5 72.5M65.5 67.5L60.5 72.5" stroke="#d6d6d6" stroke-width="1.5"/><path d="M82 67.5V72.5L85 70Z M86 67.5V72.5L89 70Z" fill="#cfcfcf"/><path d="M99.5 67.5L104.5 72.5M104.5 67.5L99.5 72.5" stroke="#d6d6d6" stroke-width="1.5"/><rect x="26" y="80" width="1" height="4" fill="#151515"/><rect x="28" y="80" width="1" height="4" fill="#151515"/><rect x="30" y="80" width="1" height="4" fill="#151515"/><rect x="32" y="80" width="1" height="4" fill="#151515"/><rect x="34" y="80" width="1" height="4" fill="#151515"/><rect x="36" y="80" width="1" height="4" fill="#151515"/><rect x="38" y="80" width="1" height="4" fill="#151515"/><rect x="40" y="80" width="1" height="4" fill="#151515"/><rect x="42" y="80" width="1" height="4" fill="#151515"/><rect x="44" y="80" width="1" height="4" fill="#151515"/><rect x="82" y="80" width="1" height="4" fill="#151515"/><rect x="84" y="80" width="1" height="4" fill="#151515"/><rect x="86" y="80" width="1" height="4" fill="#151515"/><rect x="88" y="80" width="1" height="4" fill="#151515"/><rect x="90" y="80" width="1" height="4" fill="#151515"/><rect x="92" y="80" width="1" height="4" fill="#151515"/><rect x="94" y="80" width="1" height="4" fill="#151515"/><rect x="96" y="80" width="1" height="4" fill="#151515"/><rect x="98" y="80" width="1" height="4" fill="#151515"/><rect x="100" y="80" width="1" height="4" fill="#151515"/><rect x="6" y="141" width="60" height="1" fill="#262626"/><rect x="6" y="142" width="60" height="1" fill="#3d3d3d"/><rect x="6" y="239" width="60" height="1" fill="#262626"/><rect x="6" y="240" width="60" height="1" fill="#3d3d3d"/><rect x="6" y="313" width="60" height="1" fill="#262626"/><rect x="6" y="314" width="60" height="1" fill="#3d3d3d"/><rect x="6" y="363" width="60" height="1" fill="#262626"/><rect x="6" y="364" width="60" height="1" fill="#3d3d3d"/><rect x="6" y="389" width="60" height="1" fill="#262626"/><rect x="6" y="390" width="60" height="1" fill="#3d3d3d"/><rect x="6" y="439" width="60" height="1" fill="#262626"/><rect x="6" y="440" width="60" height="1" fill="#3d3d3d"/><path d="M16.5 95.5V110.5L19.5 107.5L22.5 112.5L24.5 111.5L22 106.5H26.5Z" fill="#262626" stroke="#c8c8c8" stroke-width="1"/><path d="M47 95.5V108.5L50 105.5L53 111L55 110L52.5 104.5H56.5Z" fill="#b4b4b4"/><path d="M64 111V114H61Z" fill="#e6e6e6"/><path d="M18.5 118.5L19.8 122.5L23.5 120.8L21.5 124.2L25.5 125.5L21.5 126.8L23.5 130.5L19.8 128.5L18.5 132.5L17.2 128.5L13.5 130.5L15.5 126.8L11.5 125.5L15.5 124.2L13.5 120.8L17.2 122.5Z" fill="#c8c8c8"/><path d="M21 128L28.5 135.5" stroke="#b0b0b0" stroke-width="2"/><ellipse cx="50.8" cy="125" rx="7.5" ry="4" fill="none" stroke="#b8b8b8" stroke-width="1.3"/><path d="M44 128.5C42.5 130 45 131 44.5 133" fill="none" stroke="#b8b8b8" stroke-width="1"/><path d="M51 123V136L54 132.5L60 131Z" fill="#b8b8b8"/><path d="M13 161.5L16 152L22 148L27 153L23 159Z" fill="#b8b8b8"/><path d="M22.5 146.5L25 144.5L30.5 150L28.5 152.5Z" fill="#b0b0b0"/><circle cx="20" cy="154" r="1.2" fill="#222"/><path d="M13.5 161L19.5 155" stroke="#444" stroke-width="0.8"/><path d="M34 161V164H31Z" fill="#e6e6e6"/><path d="M45 147H57.5V151H56.5L56 148.5H52.2V159.2H54.2V160.5H48.3V159.2H50.3V148.5H46.5L46 151H45Z" fill="#c0c0c0"/><path d="M64 161V164H61Z" fill="#e6e6e6"/><path d="M14 185L27 171.5" stroke="#c0c0c0" stroke-width="1.6"/><path d="M34 185V188H31Z" fill="#e6e6e6"/><rect x="37" y="167" width="28" height="22" fill="#1f1f1f"/><defs><linearGradient id="rg" x1="0" y1="0" x2="0" y2="1"><stop offset="0" stop-color="#6a6a6a"/><stop offset="1" stop-color="#4a4a4a"/></linearGradient><linearGradient id="gg" x1="0" y1="0" x2="1" y2="0"><stop offset="0" stop-color="#3a3a3a"/><stop offset="1" stop-color="#cfcfcf"/></linearGradient><linearGradient id="gw" x1="0" y1="0" x2="1" y2="0"><stop offset="0" stop-color="#fff"/><stop offset="1" stop-color="#111"/></linearGradient></defs><rect x="44.5" y="172.5" width="13" height="11.5" fill="url(#rg)" stroke="#c8c8c8" stroke-width="1"/><path d="M64 185V188H61Z" fill="#e6e6e6"/><path d="M28.5 195.5L21 203.5" stroke="#b0b0b0" stroke-width="2.6" stroke-linecap="round"/><path d="M19 202C16 203 15.5 206 12 207.5C14 208.8 19.5 209 21.5 206.5C22.5 205 21.5 203 19 202Z" fill="#c4c4c4"/><g transform="translate(50.3,203.2) rotate(-45)"><path d="M-9.5 0L-5 -3V3Z" fill="#d0d0d0"/><rect x="-5" y="-3" width="10" height="6" fill="#787878" stroke="#222" stroke-width="0.6"/><rect x="5" y="-3" width="4.5" height="6" rx="1.8" fill="#cfcfcf"/></g><path d="M64 209V212H61Z" fill="#e6e6e6"/><path d="M12.5 222H21L24 219.5L29.5 220.5L29 228L24.5 228.5V233H12.5Z" fill="#b0b0b0"/><path d="M18 226.5C21 225 24 223 26 220L30.5 218.5L27 222.5C25 226 21.5 227.5 18 226.5Z" fill="#353535"/><path d="M26.5 221L30.5 218" stroke="#dcdcdc" stroke-width="1.3"/><path d="M44 226L50.5 220H59.5L53 226Z" fill="#c8c8c8"/><path d="M44 226H53V231.5H44Z" fill="#a8a8a8"/><path d="M53 226L59.5 220V225.5L53 231.5Z" fill="#787878"/><path d="M64 233V236H61Z" fill="#e6e6e6"/><path d="M17.5 246.2A6.3 6.3 0 0 1 26.4 254.8" fill="none" stroke="#b8b8b8" stroke-width="1.5"/><path d="M26.4 254.8A6.3 6.3 0 0 1 14.6 251.7" fill="none" stroke="#b8b8b8" stroke-width="1.8" stroke-dasharray="1.7 1.5"/><path d="M14 246.5L19.5 243.5V249.5Z" fill="#c8c8c8"/><path d="M34 258V261H31Z" fill="#e6e6e6"/><rect x="46.5" y="245.5" width="12" height="10" fill="#444" stroke="#b8b8b8" stroke-width="1"/><rect x="42.5" y="250.5" width="8.5" height="8" fill="none" stroke="#b8b8b8" stroke-width="1"/><path d="M51 252L56 247M53.5 247H56V249.5" fill="none" stroke="#d0d0d0" stroke-width="1"/><path d="M64 258V261H61Z" fill="#e6e6e6"/><path d="M14 271C15 268 18 268 18.5 271C19 276 21 279 24 277C26 275 28 275 30 278C30 281 27 282 22 282.5C18 283 16 281 17 277C17.5 274 16 272 14 271Z" fill="#aaa"/><path d="M13.5 282L20.5 275.5L24 271" stroke="#ddd" stroke-width="0.9"/><circle cx="18" cy="276.5" r="2" fill="#444" stroke="#e0e0e0" stroke-width="1"/><circle cx="13.5" cy="281.5" r="1.4" fill="#333" stroke="#ddd" stroke-width="0.8"/><circle cx="23.5" cy="271.5" r="1.4" fill="#333" stroke="#ddd" stroke-width="0.8"/><path d="M34 282V285H31Z" fill="#e6e6e6"/><rect x="47.5" y="270.5" width="11" height="10" fill="none" stroke="#c8c8c8" stroke-width="1" stroke-dasharray="1.5 1.5"/><path d="M43 269V280L46 277L51 276Z" fill="#b8b8b8"/><circle cx="16.5" cy="298" r="5" fill="#555" stroke="#a8a8a8" stroke-width="1"/><circle cx="22" cy="297" r="5.5" fill="#555" stroke="#a8a8a8" stroke-width="1" opacity="0.8"/><path d="M13 298.5H24" stroke="#eee" stroke-width="1" stroke-dasharray="1 1"/><path d="M24 298V308L26.5 305.5L31 306Z" fill="#b8b8b8"/><path d="M34 306V309H31Z" fill="#e6e6e6"/><rect x="43.5" y="292.5" width="3.5" height="15" fill="#b4b4b4"/><rect x="48" y="294.5" width="3" height="12" fill="#a8a8a8"/><rect x="52" y="296.5" width="2.5" height="8" fill="#a0a0a0"/><rect x="52" y="302.5" width="6.5" height="1.2" fill="#c0c0c0"/><rect x="48" y="304.6" width="10.5" height="1.2" fill="#c0c0c0"/><rect x="43.5" y="306.6" width="15.5" height="1.2" fill="#c8c8c8"/><path d="M43.5 299.5H54.5" stroke="#333" stroke-width="0.9"/><path d="M64 306V309H61Z" fill="#e6e6e6"/><rect x="13.5" y="319.5" width="15" height="12" fill="#222" stroke="#c8c8c8" stroke-width="1"/><path d="M14 325C17 322 21 321 25 322M14 329C18 326 22 324 28 325M19 320C21 323 21 327 20 331M24 320C26 323 26 327 25 331" fill="none" stroke="#d0d0d0" stroke-width="0.9"/><rect x="43.5" y="319.5" width="15" height="12" fill="url(#gg)" stroke="#c8c8c8" stroke-width="1"/><g transform="translate(21.3,349.4) rotate(-45)"><rect x="-9.5" y="-1.6" width="10.5" height="3.2" fill="#2a2a2a" stroke="#c8c8c8" stroke-width="0.9"/><path d="M-11.2 0L-9.5 -1.4V1.4Z" fill="#ccc"/><rect x="1" y="-3.6" width="3" height="7.2" fill="#b8b8b8"/><rect x="4" y="-2.6" width="6.5" height="5.2" rx="2.4" fill="#a6a6a6"/></g><path d="M34 357V360H31Z" fill="#e6e6e6"/><rect x="42" y="342" width="9" height="9" fill="#aaa"/><rect x="46" y="345" width="9" height="9" rx="2" fill="#777" stroke="#999" stroke-width="1"/><circle cx="55.5" cy="352" r="4.5" fill="#383838" stroke="#aaa" stroke-width="1.2"/><rect x="12" y="368" width="1" height="1" fill="#c8c8c8"/><rect x="14" y="368" width="1" height="1" fill="#c8c8c8"/><rect x="16" y="368" width="1" height="1" fill="#c8c8c8"/><rect x="18" y="368" width="1" height="1" fill="#c8c8c8"/><rect x="20" y="368" width="1" height="1" fill="#c8c8c8"/><rect x="13" y="370" width="1" height="1" fill="#c8c8c8"/><rect x="15" y="370" width="1" height="1" fill="#c8c8c8"/><rect x="17" y="370" width="1" height="1" fill="#c8c8c8"/><rect x="19" y="370" width="1" height="1" fill="#c8c8c8"/><rect x="12" y="372" width="1" height="1" fill="#c8c8c8"/><rect x="14" y="372" width="1" height="1" fill="#c8c8c8"/><rect x="16" y="372" width="1" height="1" fill="#c8c8c8"/><rect x="22" y="368" width="4" height="3" fill="#b0b0b0"/><rect x="19.5" y="371.5" width="9" height="12" fill="#2a2a2a" stroke="#aaa" stroke-width="1"/><circle cx="24" cy="378" r="2.4" fill="none" stroke="#ccc" stroke-width="1.3"/><path d="M34 381V384H31Z" fill="#e6e6e6"/><path d="M43.5 369V383.5H58.5" fill="none" stroke="#c0c0c0" stroke-width="1"/><rect x="45.5" y="376" width="2.5" height="7" fill="#aaa"/><rect x="50.5" y="371" width="2.5" height="12" fill="#777"/><rect x="55" y="373" width="2.5" height="10" fill="#aaa"/><path d="M64 381V384H61Z" fill="#e6e6e6"/><rect x="15.5" y="396.5" width="11.5" height="10" fill="#5a5a5a" stroke="#c0c0c0" stroke-width="1"/><path d="M11 397H14M28.5 397H31.5M11 406H14M28.5 406H31.5M15.5 392.5V395.5M26.5 392.5V395.5M15.5 407.5V411M26.5 407.5V411" stroke="#ddd" stroke-width="1"/><path d="M43 409L53 401L55 403Z" fill="#c8c8c8"/><path d="M52.5 400L57 395.5H61.5L55.5 401.5Z" fill="#888"/><path d="M64 409V412H61Z" fill="#e6e6e6"/><path d="M17 434V431.5L12.3 427C11.8 426 12.8 425 14 425.6L17 427.8V420.5C17 419.3 19.2 419.3 19.2 420.5V425.5V418.6C19.2 417.4 21.6 417.4 21.6 418.6V425.5V419C21.6 417.8 24 417.8 24 419V425.8V421.3C24 420.1 26.3 420.1 26.3 421.3V429.5L25 434Z" fill="#b8b8b8"/><path d="M19.2 421V426M21.6 419.5V426M24 420V426" stroke="#555" stroke-width="0.6"/><path d="M34 433V436H31Z" fill="#e6e6e6"/><circle cx="49.3" cy="423.4" r="4.6" fill="#555" stroke="#aaa" stroke-width="1.4"/><path d="M52.8 427L58.5 432.5" stroke="#aaa" stroke-width="2.2" stroke-linecap="round"/><rect x="6.5" y="442.5" width="34" height="34" fill="#fbb034" stroke="#fff" stroke-width="1"/><rect x="5.5" y="441.5" width="36" height="36" fill="none" stroke="#1a1a1a" stroke-width="1"/><rect x="23.5" y="459.5" width="36" height="36" fill="none" stroke="#1a1a1a" stroke-width="1"/><rect x="24.5" y="460.5" width="34" height="34" fill="#332817" stroke="#fff" stroke-width="1.2"/><rect x="33" y="469" width="18" height="18" fill="#353535" stroke="#fff" stroke-width="1.6"/><rect x="31.5" y="467.5" width="21" height="21" fill="none" stroke="#1a1a1a" stroke-width="1"/><path d="M51 445.5H56.5C58 445.5 58.5 446.5 58.5 448V452" fill="none" stroke="#bbb" stroke-width="1.2"/><path d="M50 445.5L53 443V448Z M56 450.5H61L58.5 453.5Z" fill="#bbb"/><rect x="9.5" y="487.5" width="8" height="8" fill="#111" stroke="#aaa" stroke-width="1"/><rect x="6.5" y="484.5" width="7" height="7" fill="#ddd" stroke="#888" stroke-width="1"/><rect x="7" y="503" width="61" height="19" fill="#262626"/><rect x="28" y="504" width="19" height="17" fill="#3c3c3c"/><rect x="48" y="504" width="19" height="17" fill="#3c3c3c"/><rect x="11.5" y="506.5" width="12" height="12" fill="#1f1f1f" stroke="#3e311e" stroke-width="1.5"/><rect x="31.5" y="506.5" width="12" height="12" fill="url(#gw)" stroke="#111" stroke-width="1"/><rect x="51.5" y="506.5" width="12" height="12" fill="#fff" stroke="#111" stroke-width="1"/><path d="M52 518L63 507" stroke="#e8141b" stroke-width="1.8"/><rect x="7" y="527" width="61" height="19" fill="#262626"/><rect x="28" y="528" width="19" height="17" fill="#3c3c3c"/><rect x="48" y="528" width="19" height="17" fill="#3c3c3c"/><rect x="8" y="528" width="19" height="17" fill="#2a2a2a"/><circle cx="16.5" cy="536" r="3.6" fill="none" stroke="#aaa" stroke-width="1.2"/><rect x="17" y="537" width="5.5" height="5.5" fill="#b8b8b8"/><circle cx="36.5" cy="535.5" r="3.8" fill="#4a4a4a" stroke="#aaa" stroke-width="1.2"/><path d="M41.5 537V541.5H37" fill="none" stroke="#aaa" stroke-width="1.2"/><circle cx="57" cy="536" r="3.6" fill="none" stroke="#666" stroke-width="1.1"/><rect x="57" y="536" width="3" height="3" fill="#666"/><rect x="24.5" y="558.5" width="12" height="11" fill="#5a5a5a" stroke="#c8c8c8" stroke-width="1"/><rect x="30.5" y="553.5" width="14" height="12" fill="#5a5a5a" stroke="#c8c8c8" stroke-width="1"/><rect x="31" y="556" width="13" height="1" fill="#c8c8c8"/><rect x="25" y="561" width="5" height="1" fill="#c8c8c8"/><rect x="85" y="92" width="9" height="9" fill="#b8b8b8"/><rect x="91" y="98" width="9.5" height="9.5" fill="#a8a8a8"/><rect x="90.5" y="97.5" width="4" height="4" fill="#888" stroke="#222" stroke-width="1"/><rect x="84.5" y="120.5" width="16" height="13" fill="url(#gg)" stroke="#999" stroke-width="1"/><path d="M84 149.5H101M84 154.5H101M84 159.5H101" stroke="#b8b8b8" stroke-width="2"/><path d="M84.5 177V190.5L100.5 183.75Z" fill="#b0b0b0"/></svg>
</body></html>
